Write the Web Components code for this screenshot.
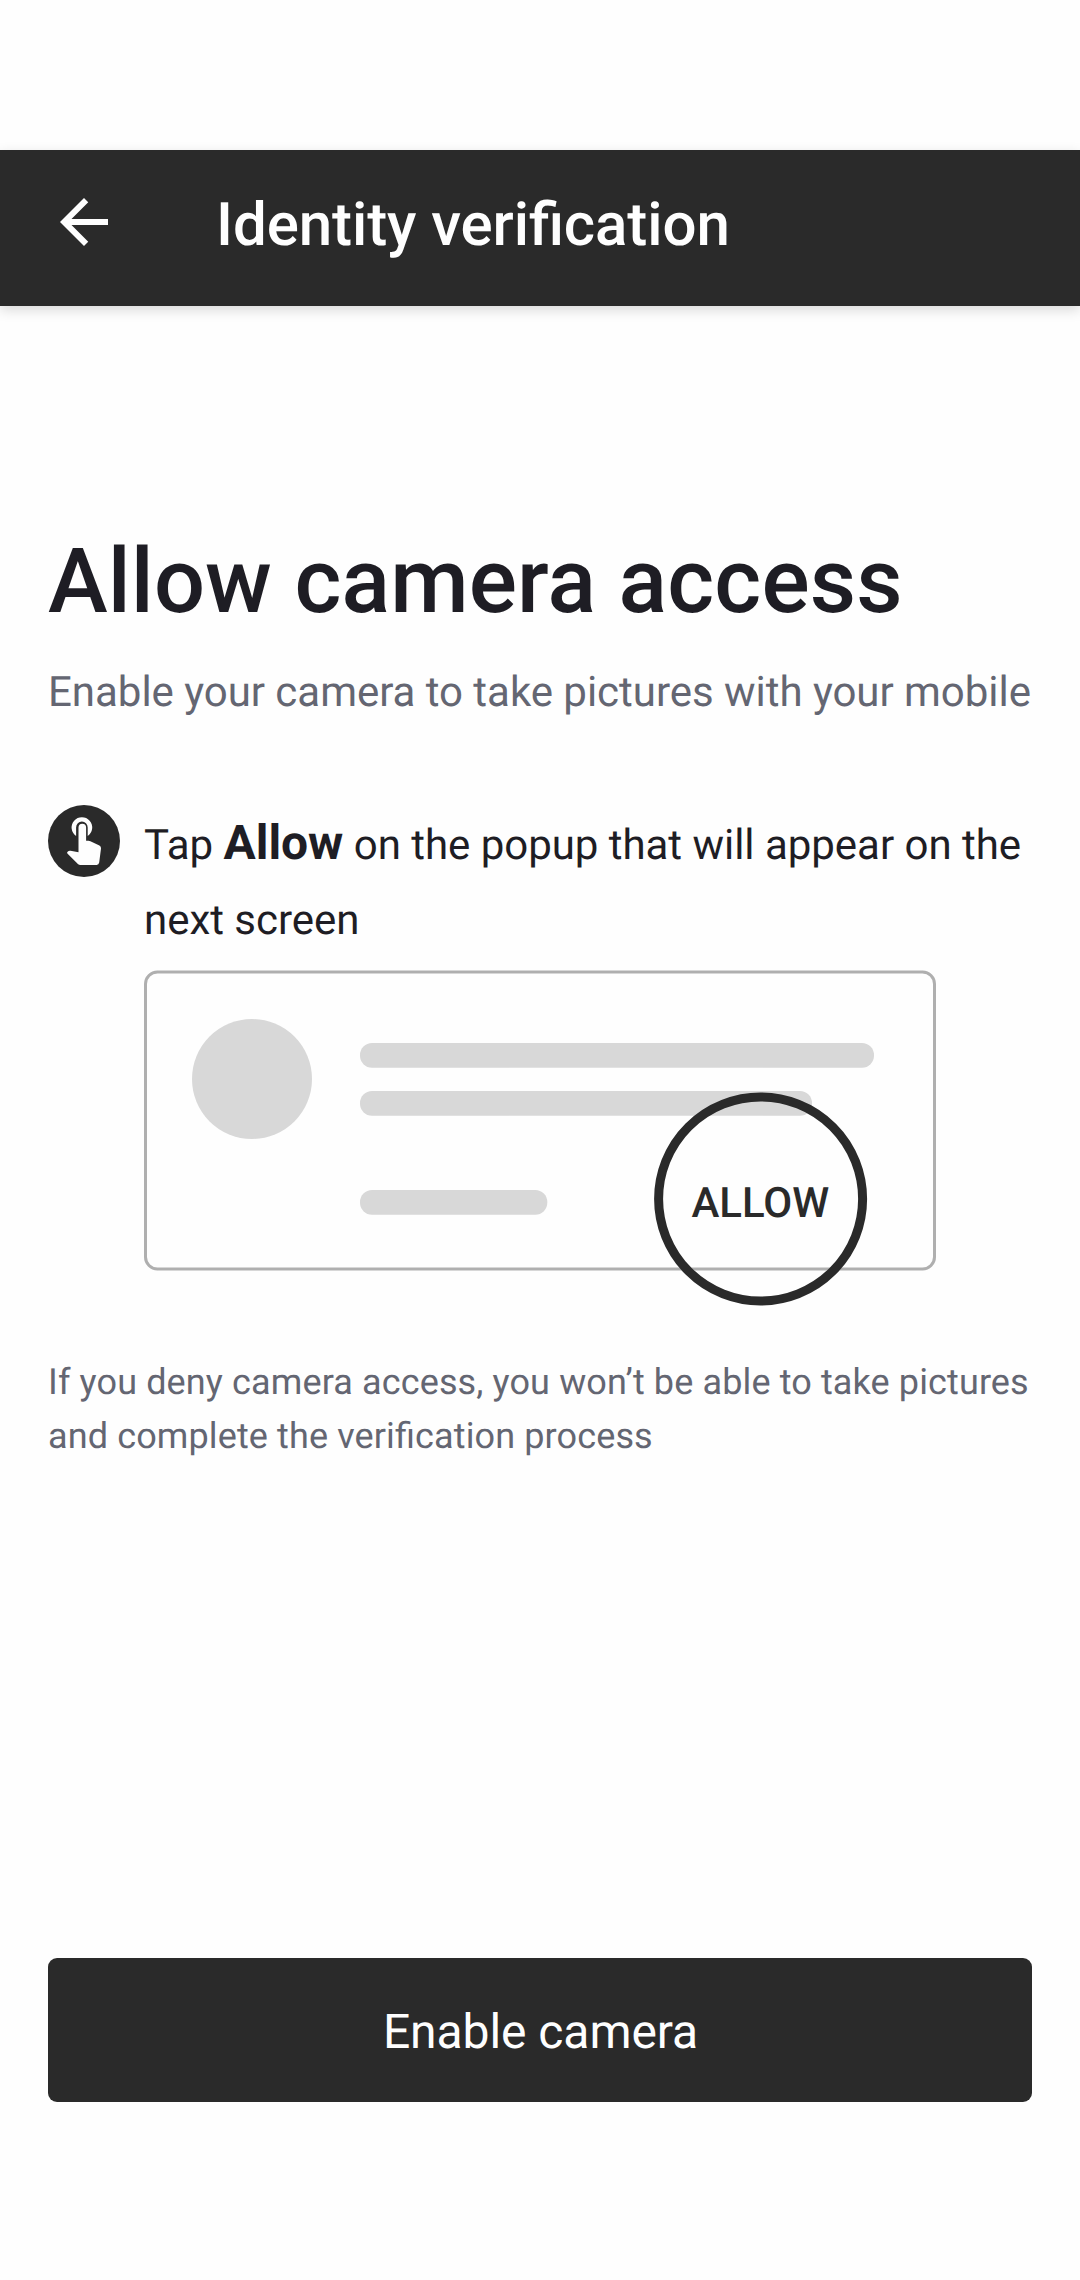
<!DOCTYPE html>
<html lang="en">
<head>
<meta charset="utf-8">
<title>Identity verification</title>
<style>
body{margin:0;background:#fefefe;font-family:Roboto,"Noto Sans",sans-serif;text-rendering:geometricPrecision}
</style>
</head>
<body>
<verify-screen></verify-screen>
<script>
function define(name, html) {
  const template = document.createElement('template');
  template.innerHTML = html;
  customElements.define(name, class extends HTMLElement {
    constructor() {
      super();
      this.attachShadow({ mode: 'open' }).append(template.content.cloneNode(true));
    }
  });
}

define('app-header', `
<style>
:host{display:flex;box-sizing:border-box;height:156px;background:#2a2a2a;color:#fefefe;align-items:center;padding:0 48px 12px;box-shadow:0 4px 12px rgba(0,0,0,.15)}
svg{width:72px;height:72px;fill:#fefefe;flex:none}
h1{margin:6px 0 0 96px;font-size:60px;line-height:72px;font-weight:500;white-space:nowrap;letter-spacing:-.08px;font-feature-settings:"liga" 1}
</style>
<svg viewBox="0 0 24 24"><path d="M20 11H7.83l5.59-5.59L12 4l-8 8 8 8 1.41-1.41L7.83 13H20z"/></svg>
<h1><slot></slot></h1>`);

define('touch-icon', `
<style>:host{display:block;width:72px;height:72px;flex:none}svg{display:block}</style>
<svg width="72" height="72" viewBox="0 0 72 72">
<circle cx="36" cy="36" r="36" fill="#2a2a2a"/>
<g fill="#fefefe">
<path d="M28.1 31V22.4a5.8 5.8 0 0 1 11.6 0V31A10.3 10.3 0 1 0 28.1 31z"/>
<path d="M30.5 47.3V22.6a3.8 3.8 0 0 1 7.6 0v13.2h2.4q1 0 1.9.5l9 4.3q1.8 1 1.6 3l-1.8 14q-.4 2.4-2.6 2.4H32.4q-1.5 0-2.5-1L19.4 48.6q-.8-.9.2-1.8 1.2-1.3 2.9-1z"/>
</g>
</svg>`);

define('popup-preview', `
<style>:host{display:block;width:792px;height:336px}svg{display:block}text{font-family:Roboto,sans-serif;font-size:42px;font-weight:500}</style>
<svg width="792" height="336" viewBox="0 0 792 336">
<rect x="1.5" y="2" width="789" height="297" rx="12" fill="none" stroke="#afafaf" stroke-width="3"/>
<g fill="#d8d8d8">
<circle cx="108" cy="109" r="60"/>
<rect x="216" y="73" width="514" height="24.7" rx="12"/>
<rect x="216" y="121" width="452" height="24.7" rx="12"/>
<rect x="216" y="220" width="187.3" height="24.7" rx="12"/>
</g>
<circle cx="616.6" cy="229" r="102" fill="none" stroke="#2a2a2a" stroke-width="9"/>
<text x="616.3" y="247" text-anchor="middle" fill="#2a2a2a">ALLOW</text>
</svg>`);

define('instruction-step', `
<style>
:host{display:flex;gap:24px;align-items:flex-start}
p{margin:3px 0 0;font-size:42px;line-height:75px;color:#1e1d24;white-space:nowrap;letter-spacing:-.03px}
::slotted(b){font-size:48px;font-weight:700;line-height:56px}
</style>
<touch-icon></touch-icon>
<p><slot></slot></p>`);

define('primary-button', `
<style>
:host{display:block}
button{display:block;box-sizing:border-box;width:100%;height:144px;border:0;border-radius:9px;padding:4px 0 0 1px;background:#2a2a2a;color:#fefefe;font:400 48px/56px Roboto,sans-serif;text-rendering:inherit;letter-spacing:-.07px}
</style>
<button><slot></slot></button>`);

define('verify-screen', `
<style>
:host{display:flex;flex-direction:column;box-sizing:border-box;height:2280px;padding-top:150px;overflow:hidden}
main{display:flex;flex-direction:column;flex:1;padding:0 48px 178px}
h2{margin:222px 0 0;font-size:90px;line-height:108px;font-weight:500;color:#1e1d24;white-space:nowrap;letter-spacing:.12px}
.sub{margin:27px 0 0;font-size:42px;line-height:60px;color:#646672;white-space:nowrap;letter-spacing:-.03px}
instruction-step{margin-top:82px}
popup-preview{margin:12px 0 0 96px}
.note{margin:49px 0 0;font-size:36px;line-height:54px;color:#646672;white-space:nowrap;letter-spacing:.125px;font-feature-settings:"liga" 1}
primary-button{margin-top:auto}
</style>
<app-header>Identity verification</app-header>
<main>
<h2>Allow camera access</h2>
<p class="sub">Enable your camera to take pictures with your mobile</p>
<instruction-step>Tap <b>Allow</b> on the popup that will appear on the<br>next screen</instruction-step>
<popup-preview></popup-preview>
<p class="note">If you deny camera access, you won’t be able to take pictures<br>and complete the verification process</p>
<primary-button>Enable camera</primary-button>
</main>`);
</script>
</body>
</html>
